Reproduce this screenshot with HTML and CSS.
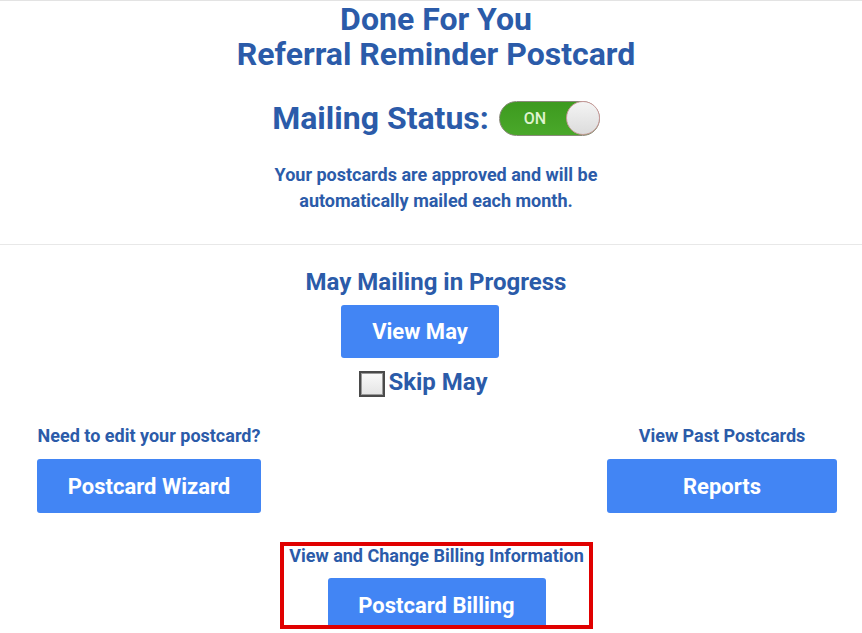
FILE: index.html
```html
<!DOCTYPE html>
<html>
<head>
<meta charset="utf-8">
<link rel="stylesheet" href="styles.css">
</head>
<body>
<div class="page">
  <section class="top">
    <h1 class="title">Done For You<br>Referral Reminder Postcard</h1>
    <div class="status">
      <span class="status-label">Mailing Status:</span>
      <div class="toggle"><span class="toggle-text">ON</span><span class="knob"></span></div>
    </div>
    <p class="note">Your postcards are approved and will be<br>automatically mailed each month.</p>
  </section>
  <section class="middle">
    <h2 class="progress">May Mailing in Progress</h2>
    <a class="btn btn-may">View May</a>
    <label class="skip"><input type="checkbox" class="check"><span>Skip May</span></label>
    <div class="row">
      <div class="col">
        <div class="label">Need to edit your postcard?</div>
        <a class="btn btn-wizard">Postcard Wizard</a>
      </div>
      <div class="col">
        <div class="label">View Past Postcards</div>
        <a class="btn btn-reports">Reports</a>
      </div>
    </div>
    <div class="billing">
      <div class="label">View and Change Billing Information</div>
      <a class="btn btn-billing">Postcard Billing</a>
    </div>
  </section>
</div>
</body>
</html>
```
FILE: styles.css
```css
* { box-sizing: border-box; }
html, body { margin: 0; padding: 0; background: #fff; }
body {
  font-family: Roboto, "Liberation Sans", Arial, sans-serif;
  color: #2b5ba9;
  width: 862px;
  height: 633px;
  overflow: hidden;
}
.page { border-top: 1px solid #e3e3e3; }
.top {
  padding-left: 10px;
  text-align: center;
  padding-bottom: 30px;
  border-bottom: 1px solid #e8e8e8;
}
.title {
  margin: 0;
  padding-top: 1px;
  font-size: 32px;
  line-height: 35px;
  font-weight: 700;
}
.status {
  margin-top: 28px;
  display: flex;
  justify-content: center;
  align-items: center;
  gap: 10px;
  height: 36px;
}
.status-label {
  font-size: 32px;
  font-weight: 700;
  line-height: 36px;
}
.toggle {
  width: 101px;
  height: 35px;
  border-radius: 18px;
  background: linear-gradient(#3d9a1f, #4aa82a);
  border: 1px solid #8a8a7a;
  display: flex;
  align-items: center;
  justify-content: space-between;
  padding-left: 24px;
}
.toggle-text {
  font-size: 16px;
  font-weight: 500;
  color: #dff3cf;
}
.knob {
  width: 34px;
  height: 34px;
  border-radius: 50%;
  background: linear-gradient(#f4f4f4, #dcdcdc);
  border: 1px solid #c89a9a;
  margin-right: -1px;
}
.note {
  margin: 26px 0 0;
  font-size: 18px;
  line-height: 26px;
  font-weight: 700;
}
.middle {
  padding-left: 10px;
  display: flex;
  flex-direction: column;
  align-items: center;
}
.progress {
  margin: 23px 0 0;
  font-size: 24px;
  line-height: 28px;
  font-weight: 700;
}
.btn {
  display: inline-flex;
  align-items: center;
  justify-content: center;
  background: #4285f4;
  color: #fff;
  font-weight: 700;
  border-radius: 3px;
  text-decoration: none;
}
.btn-may {
  margin-top: 9px;
  margin-right: 32px;
  width: 158px;
  height: 53px;
  font-size: 22px;
}
.skip {
  margin-top: 11px;
  margin-right: 25px;
  display: flex;
  align-items: flex-start;
  gap: 3px;
  font-size: 24px;
  font-weight: 700;
  line-height: 26px;
}
.check {
  appearance: none;
  -webkit-appearance: none;
  margin: 2px 0 0;
  width: 26px;
  height: 26px;
  border: 2px solid #4a4a4a;
  background: linear-gradient(#fafafa, #e4e4e4);
  box-shadow: inset 0 0 0 1px #9a9a9a;
}
.row {
  align-self: stretch;
  display: flex;
  justify-content: space-between;
  margin-top: 29px;
  padding-left: 27px;
  padding-right: 25px;
}
.col {
  display: flex;
  flex-direction: column;
  align-items: center;
}
.label {
  font-size: 18px;
  line-height: 20px;
  font-weight: 700;
}
.btn-wizard {
  margin-top: 13px;
  width: 224px;
  height: 54px;
  font-size: 22px;
}
.btn-reports {
  margin-top: 13px;
  width: 230px;
  height: 54px;
  font-size: 22px;
}
.billing {
  margin-top: 29px;
  margin-left: 1px;
  width: 313px;
  height: 87px;
  border: 4px solid #e00000;
  display: flex;
  flex-direction: column;
  align-items: center;
  overflow: hidden;
}
.btn-billing {
  margin-top: 12px;
  flex-shrink: 0;
  width: 218px;
  height: 54px;
  font-size: 22px;
}
```
